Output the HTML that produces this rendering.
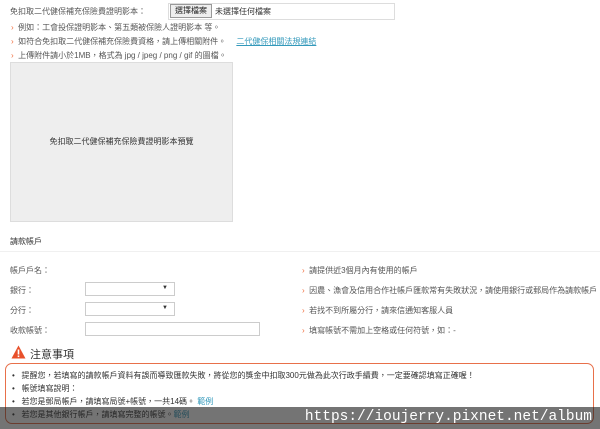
<!DOCTYPE html>
<html><head><meta charset="utf-8"><style>
*{margin:0;padding:0;box-sizing:border-box}
body{width:600px;height:429px;overflow:hidden;background:#fff;font-family:"Liberation Sans","Noto Sans CJK TC",sans-serif;color:#555;font-size:8px;position:relative}
.a{position:absolute;white-space:nowrap}
.o{color:#f07040}
.sel{position:absolute;border:1px solid #ccc;background:#fff;height:14px}
.sel:after{content:"▼";position:absolute;right:6px;top:2px;font-size:6px;color:#333}
</style></head><body>
<div class="a" style="left:10px;top:6px">免扣取二代健保補充保險費證明影本：</div>
<div class="a" style="left:168px;top:3px;width:227px;height:17px;border:1px solid #ddd"></div>
<div class="a" style="left:170px;top:4px;width:42px;height:14px;border:1px solid #999;background:#eee;color:#222;text-align:center;line-height:12px">選擇檔案</div>
<div class="a" style="left:215px;top:6px;color:#333">未選擇任何檔案</div>
<div class="a" style="left:11px;top:22px"><span class="o">›</span>&nbsp; 例如：工會投保證明影本、第五類被保險人證明影本 等。</div>
<div class="a" style="left:11px;top:36px"><span class="o">›</span>&nbsp; 如符合免扣取二代健保補充保險費資格，請上傳相關附件。 <span style="color:#39b;text-decoration:underline;margin-left:8px">二代健保相關法規連結</span></div>
<div class="a" style="left:11px;top:50px"><span class="o">›</span>&nbsp; 上傳附件請小於1MB，格式為 jpg / jpeg / png / gif 的圖檔。</div>
<div class="a" style="left:10px;top:62px;width:223px;height:160px;background:#eee;border:1px solid #ddd;text-align:center;line-height:158px;color:#333">免扣取二代健保補充保險費證明影本預覽</div>
<div class="a" style="left:10px;top:236px;color:#333">請款帳戶</div>
<div class="a" style="left:0;top:251px;width:600px;height:1px;background:#f0f0f0"></div>
<div class="a" style="left:10px;top:265px">帳戶戶名：</div>
<div class="a" style="left:10px;top:285px">銀行：</div>
<div class="a" style="left:10px;top:305px">分行：</div>
<div class="a" style="left:10px;top:325px">收款帳號：</div>
<div class="sel" style="left:85px;top:282px;width:90px"></div>
<div class="sel" style="left:85px;top:302px;width:90px"></div>
<div class="a" style="left:85px;top:322px;width:175px;height:14px;border:1px solid #ccc"></div>
<div class="a" style="left:302px;top:265px"><span class="o">›</span>&nbsp; 請提供近3個月內有使用的帳戶</div>
<div class="a" style="left:302px;top:285px"><span class="o">›</span>&nbsp; 因農、漁會及信用合作社帳戶匯款常有失敗狀況，請使用銀行或郵局作為請款帳戶</div>
<div class="a" style="left:302px;top:305px"><span class="o">›</span>&nbsp; 若找不到所屬分行，請來信通知客服人員</div>
<div class="a" style="left:302px;top:325px"><span class="o">›</span>&nbsp; 填寫帳號不需加上空格或任何符號，如：-</div>
<svg class="a" style="left:11px;top:345px" width="15" height="14" viewBox="0 0 15 14"><path d="M7.5 0.5L14.5 13.5H0.5Z" fill="#e8502a"/><rect x="6.7" y="4.5" width="1.6" height="5" fill="#fff"/><rect x="6.7" y="10.5" width="1.6" height="1.6" fill="#fff"/></svg>
<div class="a" style="left:30px;top:346px;font-size:11px;color:#333">注意事項</div>
<div class="a" style="left:5px;top:363px;width:589px;height:61px;border:1.5px solid #e8704a;border-radius:7px"></div>
<div class="a" style="left:12px;top:370px;color:#333">•&nbsp;&nbsp; 提醒您，若填寫的請款帳戶資料有誤而導致匯款失敗，將從您的獎金中扣取300元做為此次行政手續費，一定要確認填寫正確喔！</div>
<div class="a" style="left:12px;top:383px;color:#333">•&nbsp;&nbsp; 帳號填寫說明：</div>
<div class="a" style="left:12px;top:396px;color:#333">•&nbsp;&nbsp; 若您是郵局帳戶，請填寫局號+帳號，一共14碼。 <span style="color:#39b">範例</span></div>
<div class="a" style="left:12px;top:409px;color:#333">•&nbsp;&nbsp; 若您是其他銀行帳戶，請填寫完整的帳號。<span style="color:#39b">範例</span></div>
<div class="a" style="left:0;top:407px;width:600px;height:22px;background:rgba(30,30,30,.62)"></div>
<div class="a" style="right:8px;top:409px;font-family:'Liberation Mono',monospace;font-size:14.5px;color:#fff">https://ioujerry.pixnet.net/album</div>
</body></html>
